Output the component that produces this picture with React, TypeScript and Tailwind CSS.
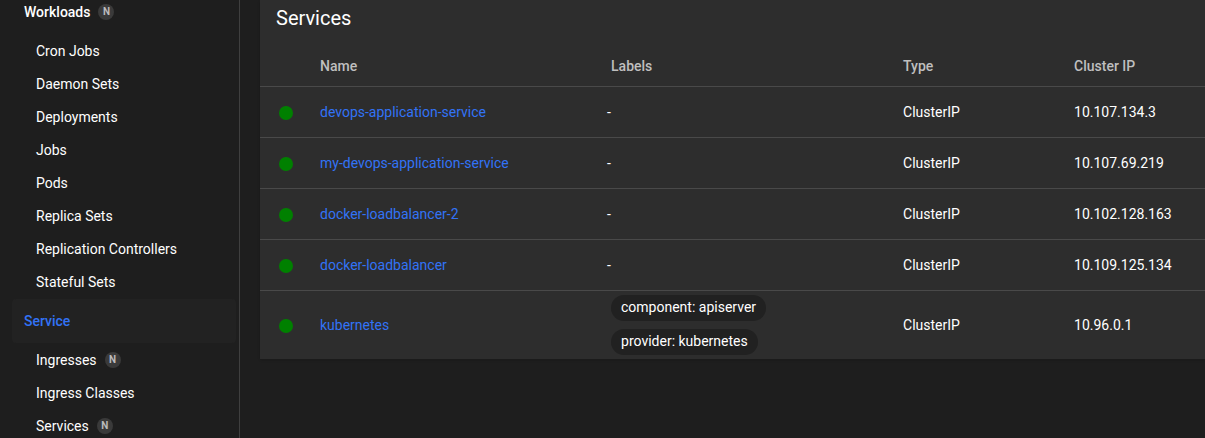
type NavEntry = { label: string; badge?: boolean };

const workloads: NavEntry[] = [
  { label: "Cron Jobs" },
  { label: "Daemon Sets" },
  { label: "Deployments" },
  { label: "Jobs" },
  { label: "Pods" },
  { label: "Replica Sets" },
  { label: "Replication Controllers" },
  { label: "Stateful Sets" },
];

const networking: NavEntry[] = [
  { label: "Ingresses", badge: true },
  { label: "Ingress Classes" },
  { label: "Services", badge: true },
];

const services = [
  { name: "devops-application-service", labels: [] as string[], type: "ClusterIP", ip: "10.107.134.3" },
  { name: "my-devops-application-service", labels: [], type: "ClusterIP", ip: "10.107.69.219" },
  { name: "docker-loadbalancer-2", labels: [], type: "ClusterIP", ip: "10.102.128.163" },
  { name: "docker-loadbalancer", labels: [], type: "ClusterIP", ip: "10.109.125.134" },
  { name: "kubernetes", labels: ["component: apiserver", "provider: kubernetes"], type: "ClusterIP", ip: "10.96.0.1" },
];

function Badge() {
  return (
    <span className="flex size-4 items-center justify-center rounded-full bg-[#3a3a3a] text-[10px] leading-4 font-bold text-[#bcbcbc]">
      N
    </span>
  );
}

function NavList({ items }: { items: NavEntry[] }) {
  return (
    <ul>
      {items.map((item) => (
        <li key={item.label}>
          <a href="#" className="flex h-[33px] items-center gap-2 pl-6">
            {item.label}
            {item.badge && <Badge />}
          </a>
        </li>
      ))}
    </ul>
  );
}

export default function App() {
  return (
    <div className="flex min-h-screen border-b-2 border-[#1c1418] bg-[#1e1e1e] font-[Roboto,sans-serif] text-sm text-white">
      <nav className="w-60 shrink-0 border-r border-[#3f3f3f] pr-[3px] pl-3">
        <a href="#" className="flex h-[34px] items-start gap-2 pt-1 pl-3 leading-4 font-medium">
          Workloads
          <Badge />
        </a>
        <NavList items={workloads} />
        <a href="#" className="mt-px flex h-11 items-center rounded-sm bg-[#222222] pl-3 font-medium text-[#3273f6]">
          Service
        </a>
        <NavList items={networking} />
      </nav>
      <main className="min-w-0 grow pl-5">
        <section className="bg-[#2d2d2d] shadow-sm">
          <h1 className="h-[46px] px-4 pt-1 text-xl">Services</h1>
          <table className="w-full table-fixed border-collapse text-left">
            <colgroup>
              <col className="w-[60px]" />
              <col className="w-[30.8%]" />
              <col className="w-[30.9%]" />
              <col className="w-[18.1%]" />
              <col />
            </colgroup>
            <thead>
              <tr className="h-10 border-b border-[#494949] text-[#bfbfbf]">
                <td />
                <th scope="col" className="font-medium">Name</th>
                <th scope="col" className="font-medium">Labels</th>
                <th scope="col" className="font-medium">Type</th>
                <th scope="col" className="font-medium">Cluster IP</th>
              </tr>
            </thead>
            <tbody>
              {services.map((service) => (
                <tr key={service.name} className="h-[51px] border-b border-[#494949] last:border-b-0">
                  <td className="pt-[2px] pl-[19px]">
                    <span className="block size-[14px] rounded-full bg-[#008000]" />
                  </td>
                  <td>
                    <a href="#" className="text-[#3273f6]">{service.name}</a>
                  </td>
                  <td>
                    {service.labels.length === 0 ? (
                      <span className="-ml-1">-</span>
                    ) : (
                      <ul className="flex flex-col items-start gap-2 py-1">
                        {service.labels.map((label) => (
                          <li key={label} className="h-[26px] rounded-full bg-[#212121] px-[10px] leading-6">
                            {label}
                          </li>
                        ))}
                      </ul>
                    )}
                  </td>
                  <td>{service.type}</td>
                  <td>{service.ip}</td>
                </tr>
              ))}
            </tbody>
          </table>
        </section>
      </main>
    </div>
  );
}
